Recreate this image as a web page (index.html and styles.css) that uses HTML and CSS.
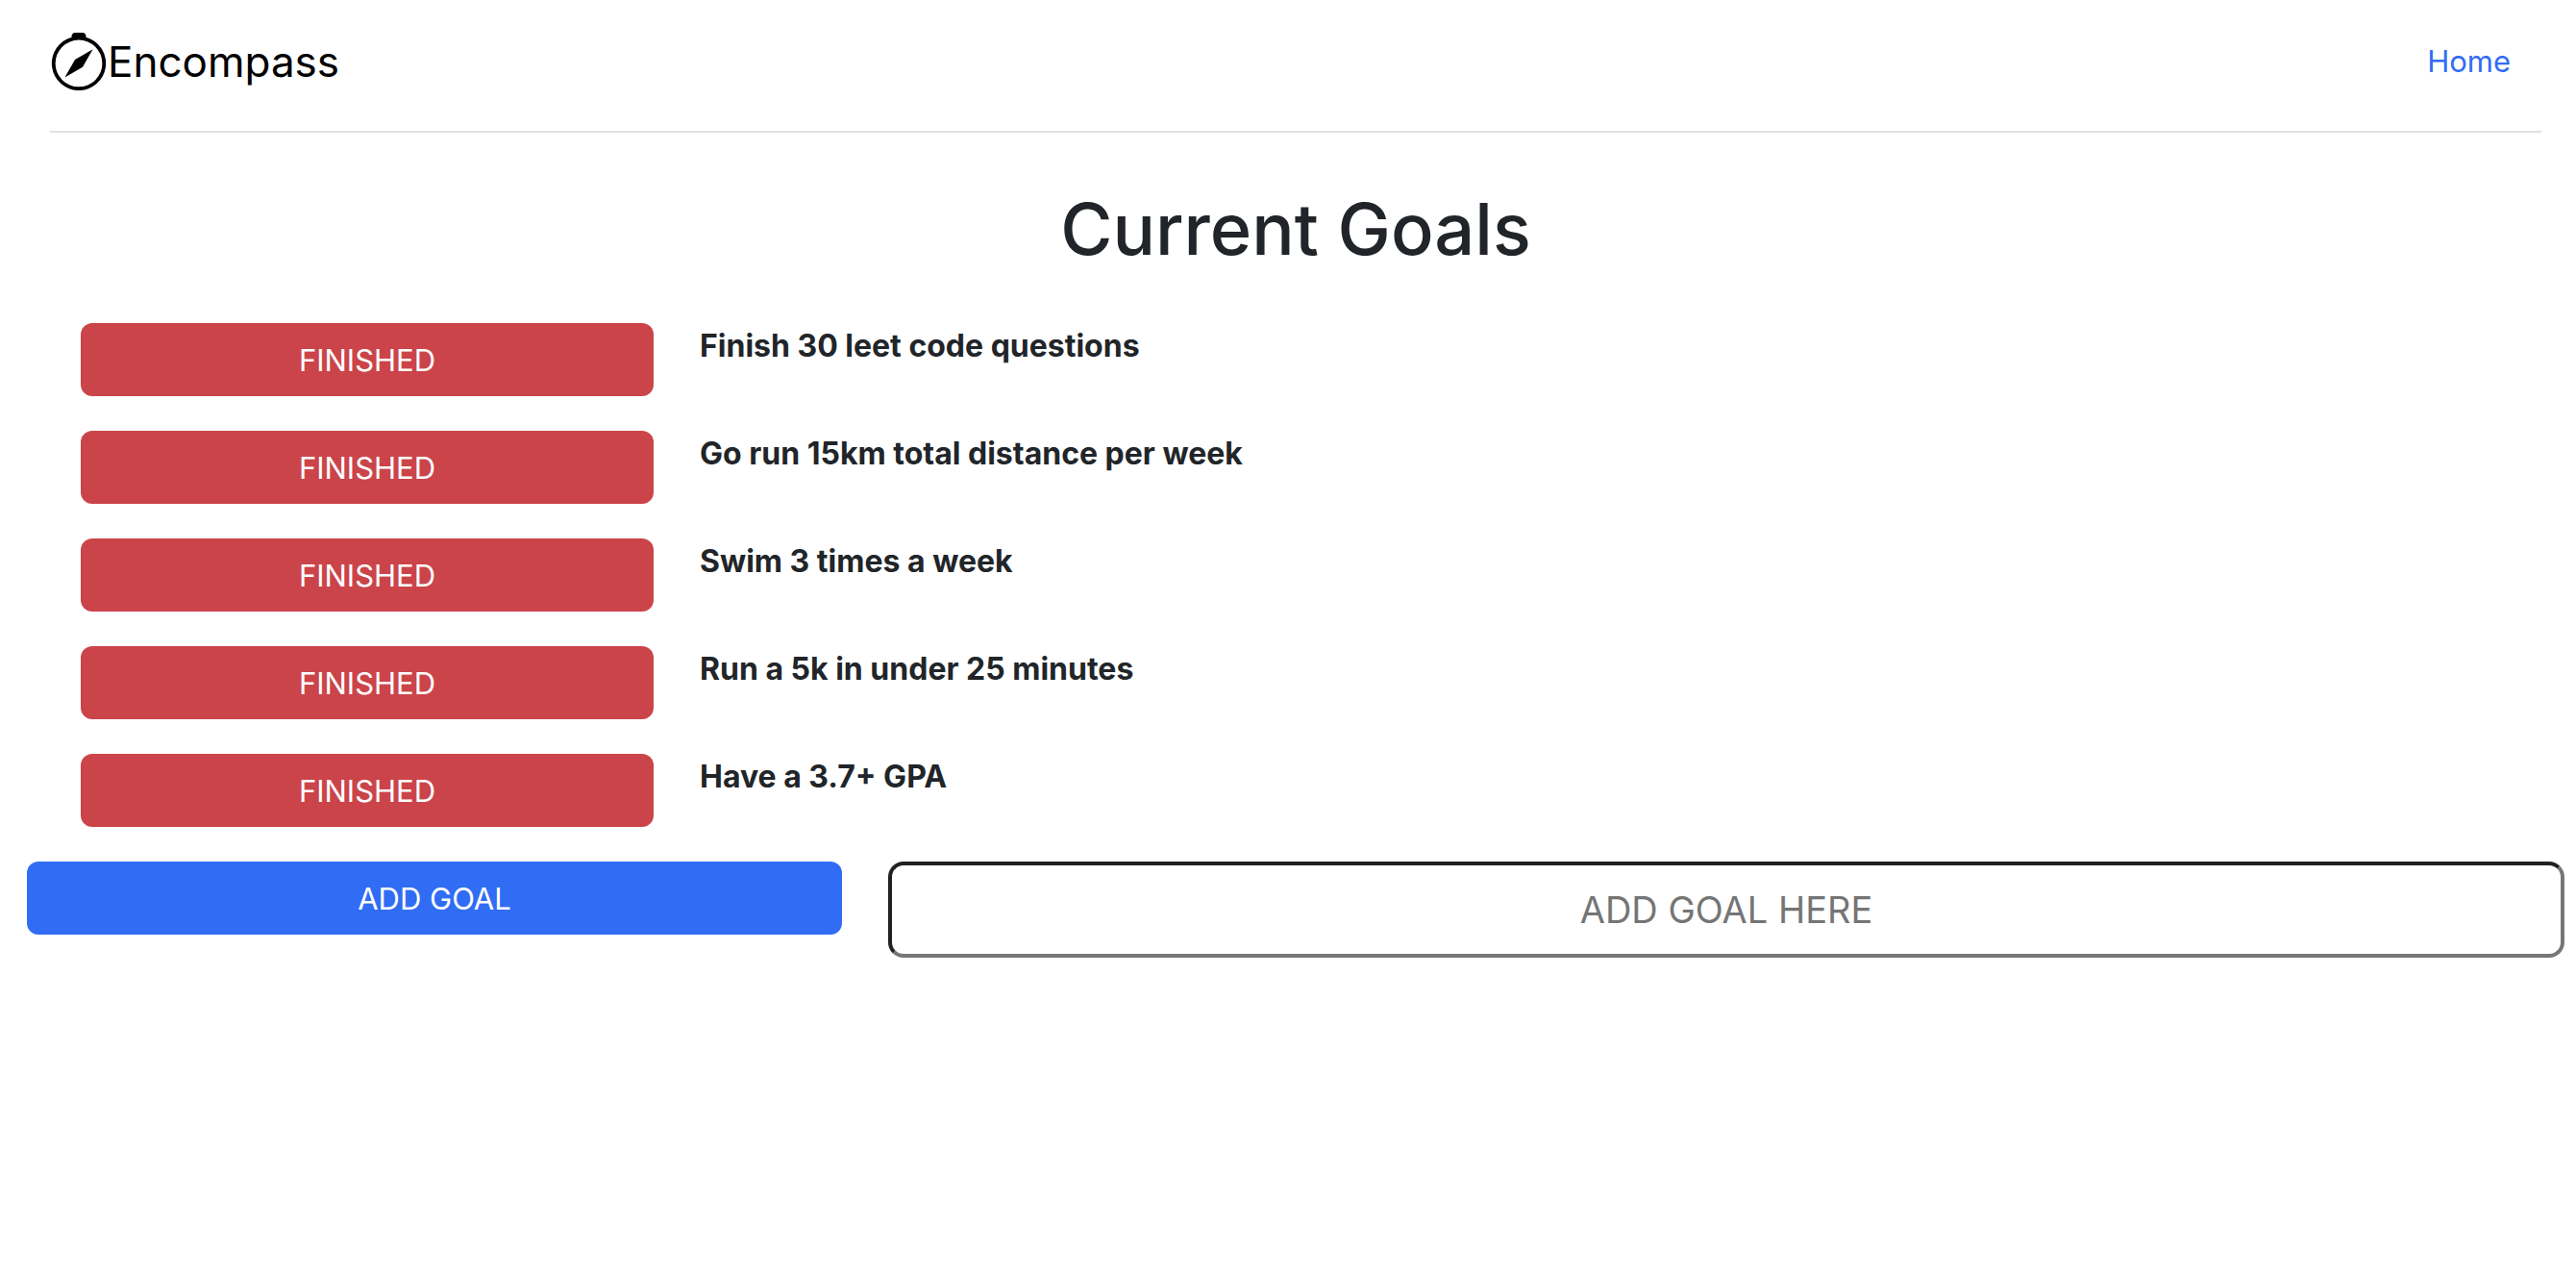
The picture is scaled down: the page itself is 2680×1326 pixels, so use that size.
FILE: index.html
```html
<!DOCTYPE html>
<html lang="en">
<head>
  <meta charset="utf-8">
  <meta name="viewport" content="width=device-width, initial-scale=1">
  <title>Encompass</title>
  <link rel="stylesheet" href="styles.css">
</head>
<body>
  <header class="site-header">
    <a class="brand" href="#">
      <svg class="brand-icon" viewBox="0 0 16 16" fill="currentColor" aria-hidden="true">
        <path d="M8 16.016a7.5 7.5 0 0 0 1.962-14.74A1 1 0 0 0 9 0H7a1 1 0 0 0-.962 1.276A7.5 7.5 0 0 0 8 16.016zm6.5-7.5a6.5 6.5 0 1 1-13 0 6.5 6.5 0 0 1 13 0z"/>
        <path d="m6.94 7.44 4.95-2.83-2.83 4.95-4.949 2.83 2.828-4.95z"/>
      </svg>
      <span>Encompass</span>
    </a>
    <nav>
      <a class="nav-link" href="#">Home</a>
    </nav>
  </header>

  <main>
    <h1 class="page-title">Current Goals</h1>

    <ul class="goals">
      <li class="goal">
        <button class="btn btn-finished" type="button">FINISHED</button>
        <strong class="goal-text">Finish 30 leet code questions</strong>
      </li>
      <li class="goal">
        <button class="btn btn-finished" type="button">FINISHED</button>
        <strong class="goal-text">Go run 15km total distance per week</strong>
      </li>
      <li class="goal">
        <button class="btn btn-finished" type="button">FINISHED</button>
        <strong class="goal-text">Swim 3 times a week</strong>
      </li>
      <li class="goal">
        <button class="btn btn-finished" type="button">FINISHED</button>
        <strong class="goal-text">Run a 5k in under 25 minutes</strong>
      </li>
      <li class="goal">
        <button class="btn btn-finished" type="button">FINISHED</button>
        <strong class="goal-text">Have a 3.7+ GPA</strong>
      </li>
    </ul>

    <form class="add-goal">
      <button class="btn btn-add" type="button">ADD GOAL</button>
      <input class="goal-input" type="text" placeholder="ADD GOAL HERE" aria-label="New goal">
    </form>
  </main>
</body>
</html>
```

FILE: styles.css
```css
*,
*::before,
*::after {
  box-sizing: border-box;
}

body {
  margin: 0;
  background: #fff;
  color: #212529;
  font-family: Inter, "Liberation Sans", sans-serif;
  font-size: 32px;
  line-height: 48px;
}

.site-header {
  display: flex;
  align-items: center;
  justify-content: space-between;
  margin: 0 36px 0 52px;
  padding: 28px 32px 36px 0;
  border-bottom: 2px solid #dee2e6;
}

.brand {
  display: flex;
  align-items: center;
  color: #000;
  font-size: 44px;
  line-height: 72px;
  text-decoration: none;
}

.brand-icon {
  width: 60px;
  height: 60px;
}

.nav-link {
  color: #316cf4;
  font-size: 31px;
  text-decoration: none;
}

.page-title {
  margin: 0;
  padding: 52px 36px 50px 52px;
  font-size: 74px;
  font-weight: 500;
  line-height: 96px;
  text-align: center;
}

.goals {
  margin: 0;
  padding: 0 68px 0 84px;
  list-style: none;
}

.goal,
.add-goal {
  display: grid;
  grid-template-columns: repeat(12, 1fr);
  align-items: start;
  column-gap: 48px;
}

.goal {
  margin-bottom: 36px;
}

.goal-text {
  grid-column: span 9;
  font-weight: 700;
}

.add-goal {
  padding: 0 12px 0 28px;
}

.btn {
  padding: 15px 24px 13px;
  border: 0;
  border-radius: 12px;
  color: #fff;
  font: inherit;
  font-size: 31px;
  text-align: center;
  cursor: pointer;
}

.btn-finished {
  grid-column: span 3;
  background: #cb444a;
}

.btn-add {
  grid-column: span 4;
  background: #316cf4;
}

.goal-input {
  grid-column: span 8;
  min-width: 0;
  height: 100px;
  padding: 0 4px;
  border: 4px solid;
  border-color: #212124 #767676 #767676 #212124;
  border-radius: 16px;
  background: #fff;
  color: #212529;
  font: inherit;
  font-size: 38px;
  text-align: center;
}

.goal-input::placeholder {
  color: #757575;
  opacity: 1;
}
```
